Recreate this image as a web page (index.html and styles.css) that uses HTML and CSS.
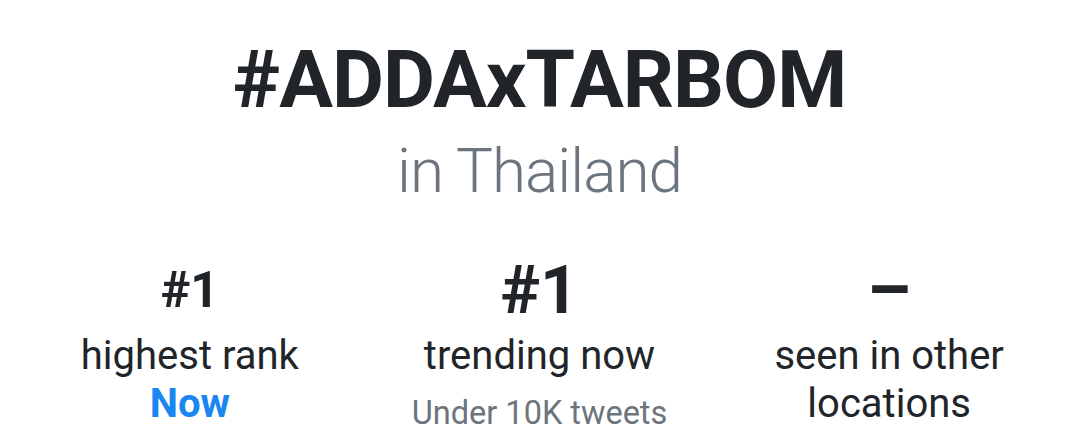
FILE: index.html
```
<!DOCTYPE html>
<html lang="en">
<head>
<meta charset="utf-8">
<title>#ADDAxTARBOM</title>
<link rel="stylesheet" href="styles.css">
</head>
<body>
<main class="trend">
  <h1 class="trend-title">#ADDAxTARBOM</h1>
  <p class="trend-place">in Thailand</p>
  <section class="stats">
    <div class="stat">
      <div class="stat-value">#1</div>
      <div class="stat-label">highest rank</div>
      <div class="stat-note stat-note--blue">Now</div>
    </div>
    <div class="stat">
      <div class="stat-value stat-value--big">#1</div>
      <div class="stat-label">trending now</div>
      <div class="stat-note stat-note--gray">Under 10K tweets</div>
    </div>
    <div class="stat">
      <div class="stat-value stat-value--dash">–</div>
      <div class="stat-label">seen in other locations</div>
    </div>
  </section>
</main>
</body>
</html>
```
FILE: styles.css
```
* { box-sizing: border-box; }
html, body {
  margin: 0;
  padding: 0;
  background: #ffffff;
}
body {
  font-family: Roboto, "Liberation Sans", Arial, sans-serif;
  color: #212529;
  width: 1079px;
  height: 442px;
  overflow: hidden;
}
.trend {
  padding-top: 32px;
  text-align: center;
}
.trend-title {
  margin: 0;
  font-size: 80px;
  line-height: 96px;
  font-weight: 700;
  letter-spacing: -1px;
  color: #212529;
}
.trend-place {
  margin: 3px 0 0;
  font-size: 62px;
  line-height: 80px;
  font-weight: 300;
  letter-spacing: -1px;
  color: #6c757d;
}
.stats {
  display: grid;
  grid-template-columns: repeat(3, 1fr);
  padding: 0 15px;
  margin-top: 39px;
}
.stat {
  display: flex;
  flex-direction: column;
  align-items: center;
}
.stat-value {
  height: 80px;
  font-size: 50px;
  line-height: 80px;
  font-weight: 700;
}
.stat-value--big {
  font-size: 67px;
}
.stat-value--dash {
  font-size: 70px;
}
.stat-label {
  margin-top: 2px;
  font-size: 40px;
  line-height: 48px;
  font-weight: 400;
}
.stat-note {
  font-size: 40px;
  line-height: 48px;
}
.stat-note--blue {
  font-weight: 700;
  color: #1a86f0;
}
.stat-note--gray {
  margin-top: 9px;
  font-size: 32.5px;
  line-height: 48px;
  color: #6c757d;
}
```
